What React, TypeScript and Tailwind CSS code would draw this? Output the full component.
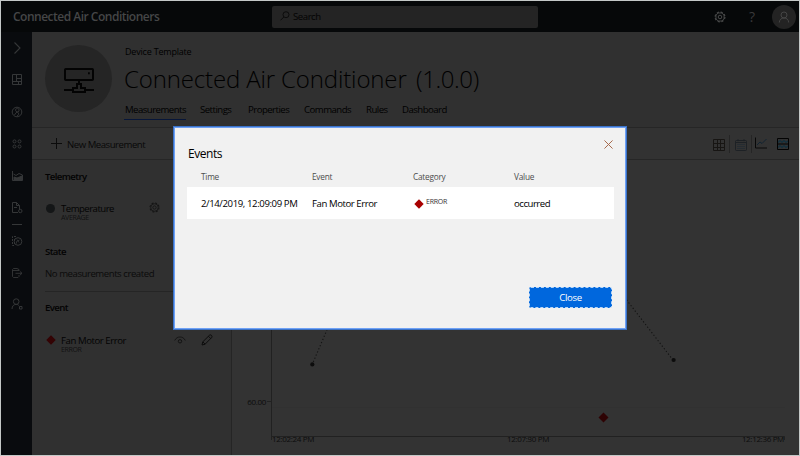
import React from "react";

type IconProps = { className?: string };

const Diamond = ({ className = "" }: IconProps) => (
  <svg viewBox="0 0 10 10" className={className} fill="currentColor"><path d="M5 0.3 9.7 5 5 9.7 0.3 5Z" /></svg>
);

const Gear = ({ className = "" }: IconProps) => (
  <svg viewBox="0 0 12 12" className={className} fill="none" stroke="currentColor">
    <circle cx="6" cy="6" r="4.9" strokeWidth="1.2" strokeDasharray="2.2 1.65" />
    <circle cx="6" cy="6" r="4.1" strokeWidth="0.9" />
    <circle cx="6" cy="6" r="1.8" strokeWidth="1" />
  </svg>
);

const Svg = ({ children, className = "size-[12px]" }: { children: React.ReactNode; className?: string }) => (
  <svg viewBox="0 0 12 12" className={className} fill="none" stroke="currentColor" strokeWidth="1">{children}</svg>
);

const sideIcons = [
  { top: "mt-[10px]", art: <path d="M3.5 0.5 9 6 3.5 11.5" strokeWidth="1.1" /> },
  { top: "mt-[20px]", art: <path d="M1.5 0.5h9v10h-9zM5.5 0.5v7M1.5 7.5h9M7.5 7.5v3M5.5 4.5h5" /> },
  { top: "mt-[20px]", art: <><circle cx="6" cy="6" r="4.8" /><path d="M3.5 9 5 6.8 8 5.2V3.2L6.5 2.3 4.6 3.2v1.6L7.6 7v1.8L6 9.8" strokeWidth="0.9" /></> },
  { top: "mt-[20px]", art: <><circle cx="3.5" cy="3.4" r="1.5" /><circle cx="8.5" cy="3.4" r="1.5" /><circle cx="3.5" cy="8.5" r="1.5" /><circle cx="8.5" cy="8.5" r="1.5" /></> },
  { top: "mt-[20px]", art: <><path d="M1.5 1v9.5h10V5L8 3.5 5 5.5 2.5 4" /><path d="M3 10V7l3 1 5-2v4Z" fill="currentColor" /></> },
  { top: "mt-[20px]", art: <><path d="M7 10.5H1.5v-10h4l3 3V7M5.5 0.5v3h3M3 5.5h3" /><circle cx="9.3" cy="9" r="1.7" /></> },
];

const Sidebar = () => (
  <nav className="flex w-[31px] shrink-0 flex-col items-center bg-[#090b0e] text-[#353738]">
    {sideIcons.map((i, n) => (
      <Svg key={n} className={`${i.top} size-[12px] shrink-0`}>{i.art}</Svg>
    ))}
    <div className="mt-[10px] h-px w-[10px] shrink-0 bg-[#353738]" />
    <Svg className="mt-[10px] size-[12px] shrink-0">
      <path d="M3 10.5H1.5v-9H6M3.5 4v5" strokeDasharray="2 1" />
      <circle cx="7" cy="6.5" r="3.8" /><path d="M5.5 8.5v-2L8.5 5M6 4.5l2 3" strokeWidth="0.8" />
    </Svg>
    <Svg className="mt-[20px] size-[12px] shrink-0">
      <path d="M8 4V2.5L6 1.5H2.5L1.5 2.5v7l1 1H7l1-1V8M1.5 3.5H8M4.5 6.3H11M9 4.5l2 1.8-2 1.8" strokeWidth="0.9" />
    </Svg>
    <Svg className="mt-[19px] size-[12px] shrink-0">
      <circle cx="5.2" cy="3.6" r="2.8" /><path d="M1 11c0-3 1.8-4.6 4.2-4.6 1.2 0 2 .3 2.6 1" /><path d="M8.5 8.5h2.5v2.5H8.5z" />
    </Svg>
  </nav>
);

const TopBar = () => (
  <header className="flex h-[31px] shrink-0 items-center bg-[#060809]">
    <div className="w-[271px] shrink-0 whitespace-nowrap pl-[12px] text-[12px] font-semibold leading-[16px] tracking-[-0.5px] text-[#454647]">Connected Air Conditioners</div>
    <div className="flex h-[22px] w-[266px] shrink-0 items-center rounded-[2px] bg-[#242424] pl-[8px]">
      <svg viewBox="0 0 10 10" className="mt-[-2px] size-[10px] text-[#090909]" fill="none" stroke="currentColor" strokeWidth="0.9"><circle cx="6" cy="3.7" r="3" /><path d="M3.8 6 .5 9.3" /></svg>
      <span className="pl-[3px] pt-px text-[9.6px] leading-[14px] tracking-[-0.45px] text-[#030303]">Search</span>
    </div>
    <Gear className="ml-[176px] size-[12px] shrink-0 text-[#484949]" />
    <span className="ml-[20px] w-[12px] text-center text-[14px] leading-[16px] text-[#39393a]">?</span>
    <div className="ml-[14px] flex size-[24px] shrink-0 items-center justify-center rounded-full bg-[#232323] text-[#454545]">
      <Svg><circle cx="6" cy="4" r="3" /><path d="M1.3 11.5C1.5 8.5 3.3 7 6 7s4.5 1.5 4.7 4.5" /></Svg>
    </div>
  </header>
);

const DeviceHeader = () => (
  <section className="flex h-[96px] shrink-0 border-b border-[#262626] bg-[#303030]">
    <div className="ml-[13px] mt-[13px] flex size-[67px] items-center justify-center rounded-full bg-[#252525]">
      <svg viewBox="0 0 32 26" className="mt-[2px] h-[26px] w-[32px]" fill="none" stroke="#030303" strokeWidth="2">
        <rect x="2" y="2" width="28" height="11" rx="0.8" /><path d="M16 13v4M1 23h9M22 23h9M10 25v-4h4V17h4v4h4v4Z" /><path d="M25 6.3h1.8" />
      </svg>
    </div>
    <div className="ml-[12px] text-black">
      <div className="pl-px pt-[13px] text-[9px] leading-[13px] tracking-[-0.2px]">Device Template</div>
      <h1 className="flex h-[34px] gap-[10px] whitespace-nowrap pt-[5px] text-[24px] font-light leading-[32px]">
        <span className="w-[282px] tracking-[-0.14px]">Connected Air Conditioner</span>
        <span className="tracking-[-0.4px]">(1.0.0)</span>
      </h1>
      <div className="mt-[11px] flex whitespace-nowrap text-[9.6px] font-medium leading-[14px] tracking-[-0.52px]">
        <div className="h-[17px] w-[62px] border-b border-[#071639] pl-px">Measurements</div>
        <div className="ml-[14px] w-[48px]">Settings</div>
        <div className="w-[56px]">Properties</div>
        <div className="w-[62px]">Commands</div>
        <div className="w-[36px]">Rules</div>
        <div>Dashboard</div>
      </div>
    </div>
  </section>
);

const Toolbar = () => (
  <div className="flex h-[32px] shrink-0 items-center border-b border-[#262626] bg-[#323232]">
    <svg viewBox="0 0 11 11" className="ml-[19px] size-[11px]" stroke="#0b0b0b" strokeWidth="1"><path d="M5.5 0v11M0 5.5h11" /></svg>
    <span className="pl-[5px] pt-[2px] text-[9.6px] leading-[14px] tracking-[-0.47px] text-[#080808]">New Measurement</span>
    <div className="ml-auto flex items-center pr-[10px]">
      <svg viewBox="0 0 12 12" className="mt-[2px] size-[12px]" fill="none" stroke="#171513"><path d="M.5.5h11v11H.5zM4.5 0v12M7.5 0v12M0 4.5h12M0 8.5h12" /></svg>
      <div className="ml-[4px] h-[18px] w-px bg-[#252525]" />
      <svg viewBox="0 0 12 12" className="ml-[5px] mt-[2px] size-[12px]" fill="none" stroke="#1d2125"><rect x=".5" y="1.5" width="11" height="10" rx="1" /><path d="M1 3.5h10M3 .2v2M9 .2v2" /><path d="M2.5 5.5h7M2.5 7.5h7M2.5 9.5h7" strokeDasharray="1 1" stroke="#182632" /></svg>
      <div className="ml-[4px] h-[18px] w-px bg-[#252525]" />
      <svg viewBox="0 0 12 12" className="ml-[3px] mt-[-1px] size-[12px]" fill="none"><path d="M.5.5v10.5H12" stroke="#080808" /><path d="M2 8 5 5l2 1.5 4.5-4.5" stroke="#102331" /></svg>
      <svg viewBox="0 0 12 12" className="ml-[10px] size-[12px]" fill="none"><path d="M1 4.5 3 2.5l2 2 2-2 2 2 2-1.5M1 9.5l2-2 2 2 2-2 2 2 2-1.5" stroke="#12303e" strokeWidth="1.1" /><path d="M.5.5h11v11H.5zM.5 6h11" stroke="#030303" /></svg>
    </div>
  </div>
);

const Measurements = () => (
  <aside className="flex w-[200px] shrink-0 flex-col border-r border-[#252525] bg-[#303030] text-[9.6px] leading-[14px] text-[#030303]">
    <div className="ml-[13px] mt-[10px] font-semibold tracking-[-0.6px]">Telemetry</div>
    <div className="ml-[14px] mt-[16px] flex items-start">
      <div className="mt-[4px] size-[9px] rounded-full bg-[#141617]" />
      <div className="ml-[6px] w-[88px]">
        <div className="pt-[2px] tracking-[-0.52px]">Temperature</div>
        <div className="mt-[-3px] text-[7px] leading-[9px] tracking-[-0.35px] text-[#101010]">AVERAGE</div>
      </div>
      <Gear className="mt-[2px] size-[11px] text-[#151515]" />
    </div>
    <div className="ml-[13px] mt-[23px] font-semibold tracking-[-0.6px]">State</div>
    <div className="ml-[13px] mt-[8px] tracking-[-0.45px] text-[#0b0b0b]">No measurements created</div>
    <div className="ml-[13px] mt-[10px] h-px bg-[#252525]" />
    <div className="ml-[13px] mt-[9px] font-semibold tracking-[-0.6px]">Event</div>
    <div className="ml-[14px] mt-[19px] flex items-start">
      <Diamond className="mt-px size-[10px] text-[#340304]" />
      <div className="ml-[5px] w-[113px]">
        <div className="tracking-[-0.43px]">Fan Motor Error</div>
        <div className="mt-[-3px] text-[7px] leading-[9px] tracking-[-0.35px] text-[#101010]">ERROR</div>
      </div>
      <Svg className="size-[12px] text-[#101010]"><path d="M.7 6.5C2 3.8 4 3 6 3s4 .8 5.3 3.5" strokeWidth="0.8" /><circle cx="6" cy="7.3" r="1.7" strokeWidth="0.9" /></Svg>
      <Svg className="ml-[15px] size-[12px] text-[#080808]"><path d="m1 11 .8-3.2 6.7-6.6c1.5-1 3.1.8 2.3 2.2L4.1 10.2ZM7.5 2.3l2.3 2.3M1.8 7.8l2.3 2.4" strokeWidth="0.9" /></Svg>
    </div>
  </aside>
);

const Chart = () => (
  <main className="relative min-w-0 flex-1 bg-[#333333]">
    <svg viewBox="0 0 567 295" className="absolute left-0 top-0 h-[295px] w-[567px]" fill="none">
      <path d="M39.5 0V276" stroke="#212121" />
      <path d="M39.5 276.5H552.5V280M39.5 276v4M296.5 276v4M35 241.5h4" stroke="#212121" />
      <path d="M40 247.5H553" stroke="#313131" />
      <path d="M80 205 97 165M441 200 380 121" stroke="#121212" strokeWidth="1.1" strokeDasharray="1.2 2.2" />
      <circle cx="80.3" cy="204.4" r="2.1" fill="#0c0c0c" /><circle cx="441.6" cy="200" r="2.1" fill="#0c0c0c" />
      <path d="M371.5 252.5 376.5 257.5 371.5 262.5 366.5 257.5Z" fill="#2e0304" />
    </svg>
    <div className="flex h-full flex-col whitespace-nowrap text-[8px] leading-[11px] tracking-[-0.33px] text-[#0c0c0c]">
      <div className="mt-[236px] w-[34px] text-right">60.00</div>
      <div className="mt-[26px] flex justify-between pl-[40px] pr-[15px]">
        <span>12:02:24 PM</span><span>12:07:30 PM</span><span>12:12:36 PM</span>
      </div>
    </div>
  </main>
);

const EventsDialog = () => (
  <div role="dialog" className="absolute left-[172px] top-[125px] h-[204px] w-[454px] border border-[#3b73c9] bg-[#f1f1f1]">
    <div className="flex h-full flex-col border border-[#6fa1f5] px-[12px]">
      <div className="flex h-[39px] items-start justify-between">
        <h2 className="pl-px pt-[17px] text-[12px] leading-[18px] tracking-[-0.45px] text-black">Events</h2>
        <svg viewBox="0 0 10 10" className="mt-[12px] size-[9px]" stroke="#a5684a" strokeWidth="1.1"><path d="m.5.5 9 9M9.5.5l-9 9" /></svg>
      </div>
      <div className="flex h-[20px] pl-[14px] pt-[4px] text-[8.3px] leading-[12px] tracking-[-0.25px] text-[#4d4d4d]">
        <span className="w-[111px]">Time</span><span className="w-[101px]">Event</span><span className="w-[101px]">Category</span><span>Value</span>
      </div>
      <div className="flex h-[32px] w-[427px] items-center bg-white pl-[14px] pt-px text-[9.6px] leading-[14px] text-black">
        <span className="w-[111px] tracking-[-0.4px]">2/14/2019, 12:09:09 PM</span>
        <span className="w-[101px] tracking-[-0.43px]">Fan Motor Error</span>
        <span className="flex w-[101px] items-center pl-px"><Diamond className="size-[10px] text-[#a80000]" /><span className="mt-[-3px] pl-[2px] text-[7px] leading-[10px] tracking-[-0.25px] text-[#333]">ERROR</span></span>
        <span className="tracking-[-0.48px]">occurred</span>
      </div>
      <button className="ml-auto mr-[1px] mt-[68px] h-[21px] w-[83px] rounded-[2px] border border-dashed border-[#b7d5f7] bg-[#0067dd] text-[9.6px] font-medium leading-[18px] tracking-[-0.35px] text-white">Close</button>
    </div>
  </div>
);

export default function App() {
  return (
    <div className="relative flex h-[456px] w-[800px] flex-col overflow-hidden border border-[#c4c8c7] bg-[#303030] font-['Open_Sans','Noto_Sans',sans-serif]">
      <TopBar />
      <div className="flex min-h-0 flex-1">
        <Sidebar />
        <div className="flex min-w-0 flex-1 flex-col">
          <DeviceHeader />
          <Toolbar />
          <div className="flex min-h-0 flex-1"><Measurements /><Chart /></div>
        </div>
      </div>
      <EventsDialog />
    </div>
  );
}
